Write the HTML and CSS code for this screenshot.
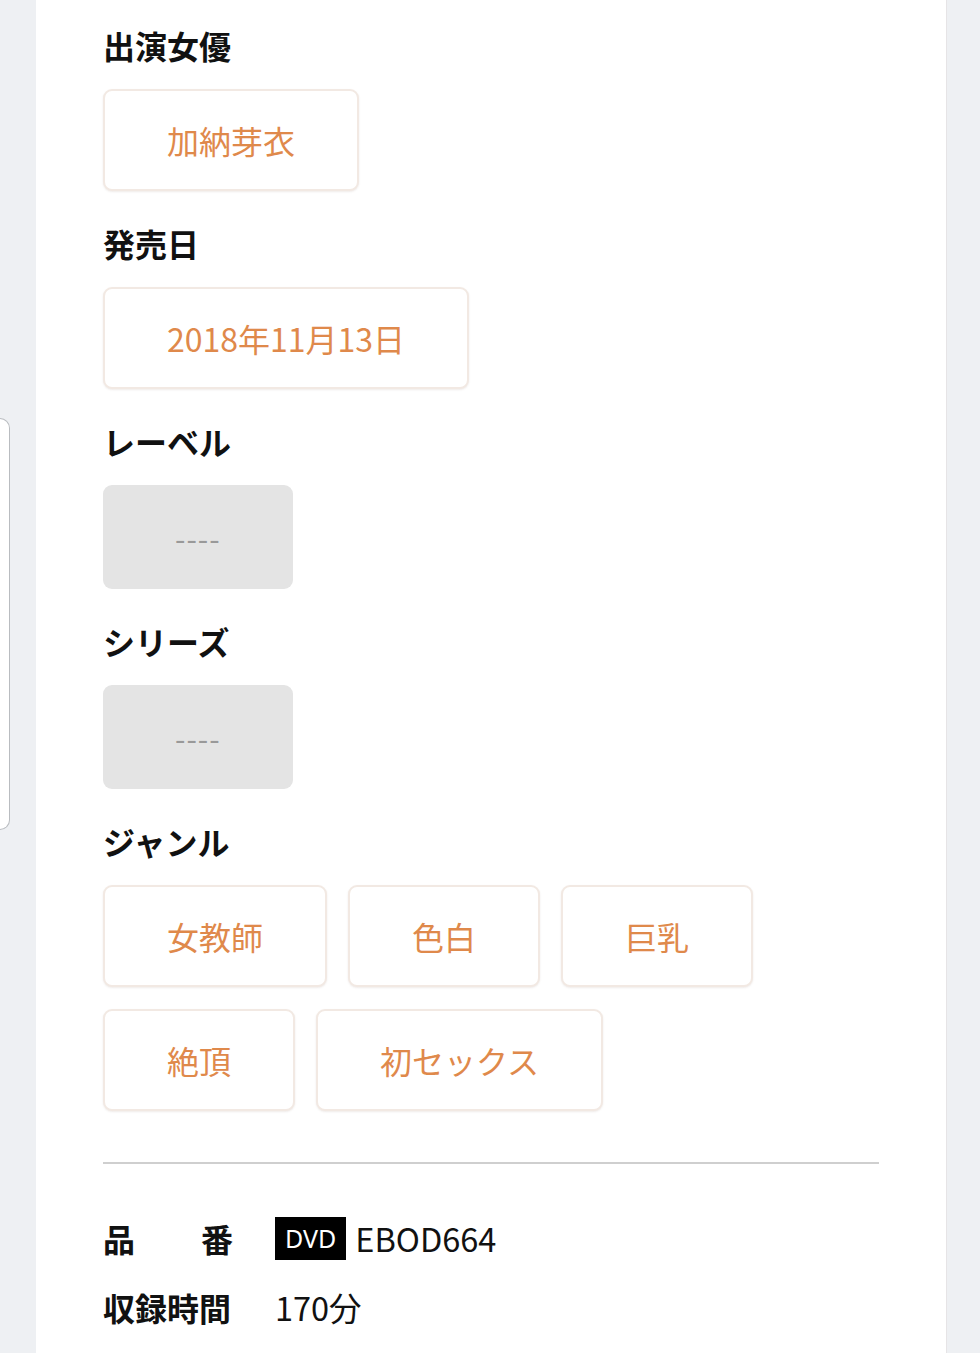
FILE: index.html
```html
<!DOCTYPE html>
<html lang="ja">
<head>
    <meta charset="UTF-8">
    <meta name="viewport" content="width=device-width, initial-scale=1.0">
    <title>作品詳細</title>
    <link rel="stylesheet" href="styles.css">
</head>
<body>
    <div class="side-tab"></div>
    <div class="card">
        <div class="section">
            <h3 class="section-title">出演女優</h3>
            <div class="tag-list">
                <a class="tag" href="#">加納芽衣</a>
            </div>
        </div>

        <div class="section">
            <h3 class="section-title">発売日</h3>
            <div class="tag-list">
                <span class="tag">2018年11月13日</span>
            </div>
        </div>

        <div class="section">
            <h3 class="section-title">レーベル</h3>
            <div class="tag-list">
                <span class="tag tag-empty">----</span>
            </div>
        </div>

        <div class="section">
            <h3 class="section-title">シリーズ</h3>
            <div class="tag-list">
                <span class="tag tag-empty">----</span>
            </div>
        </div>

        <div class="section">
            <h3 class="section-title">ジャンル</h3>
            <div class="tag-list">
                <a class="tag" href="#">女教師</a>
                <a class="tag" href="#">色白</a>
                <a class="tag" href="#">巨乳</a>
                <a class="tag" href="#">絶頂</a>
                <a class="tag" href="#">初セックス</a>
            </div>
        </div>

        <hr class="divider">

        <dl class="spec">
            <div class="spec-row">
                <dt class="spec-label"><span>品</span><span>番</span></dt>
                <dd class="spec-value"><span class="badge">DVD</span>EBOD664</dd>
            </div>
            <div class="spec-row">
                <dt class="spec-label"><span>収録時間</span></dt>
                <dd class="spec-value">170分</dd>
            </div>
        </dl>
    </div>
</body>
</html>
```

FILE: styles.css
```css
body {
    margin: 0;
    background-color: #eef0f3;
    font-family: "Noto Sans CJK JP", "Noto Sans", sans-serif;
    color: #111111;
}

.side-tab {
    position: absolute;
    left: 0;
    top: 418px;
    width: 9px;
    height: 410px;
    background-color: #ffffff;
    border: 1px solid #b9bcc0;
    border-left: none;
    border-radius: 0 10px 10px 0;
}

.card {
    width: 910px;
    min-height: 1353px;
    margin-left: 36px;
    padding: 21px 67px 40px 67px;
    box-sizing: border-box;
    background-color: #ffffff;
    box-shadow: 1px 0 0 #e6e4e6;
}

.section {
    margin-bottom: 28px;
}

.section-title {
    margin: 0 0 20px 0;
    font-size: 32px;
    line-height: 48px;
    font-weight: bold;
    color: #111111;
}

.tag-list {
    display: flex;
    flex-wrap: wrap;
    gap: 22px 21px;
}

.tag {
    display: block;
    padding: 25px 62px;
    font-size: 32px;
    line-height: 48px;
    color: #df894b;
    text-decoration: none;
    background-color: #ffffff;
    border: 2px solid #f2e9e3;
    border-radius: 9px;
    box-shadow: 0 1px 2px rgba(120, 90, 70, 0.12);
}

.tag-wide {
    letter-spacing: 0.2px;
}

.tag-empty {
    padding: 28px 72px;
    color: #999999;
    background-color: #e4e4e4;
    border: none;
    box-shadow: none;
    font-size: 30px;
    letter-spacing: 1px;
}

.divider {
    margin: 51px 0 0 0;
    border: none;
    border-top: 2px solid #cfcfcf;
}

.spec {
    margin: 50px 0 0 0;
}

.spec-row {
    display: flex;
    align-items: center;
    margin-bottom: 21px;
}

.spec-label {
    display: flex;
    justify-content: space-between;
    width: 130px;
    margin-right: 42px;
    font-size: 32px;
    line-height: 48px;
    font-weight: bold;
}

.spec-value {
    display: flex;
    align-items: center;
    margin: 0;
    font-size: 32.5px;
    line-height: 48px;
    color: #111111;
}

.badge {
    display: inline-block;
    padding: 0 10px;
    margin-right: 9px;
    background-color: #000000;
    color: #ffffff;
    font-family: "Noto Sans", sans-serif;
    font-size: 25px;
    line-height: 43px;
    height: 43px;
}
```
